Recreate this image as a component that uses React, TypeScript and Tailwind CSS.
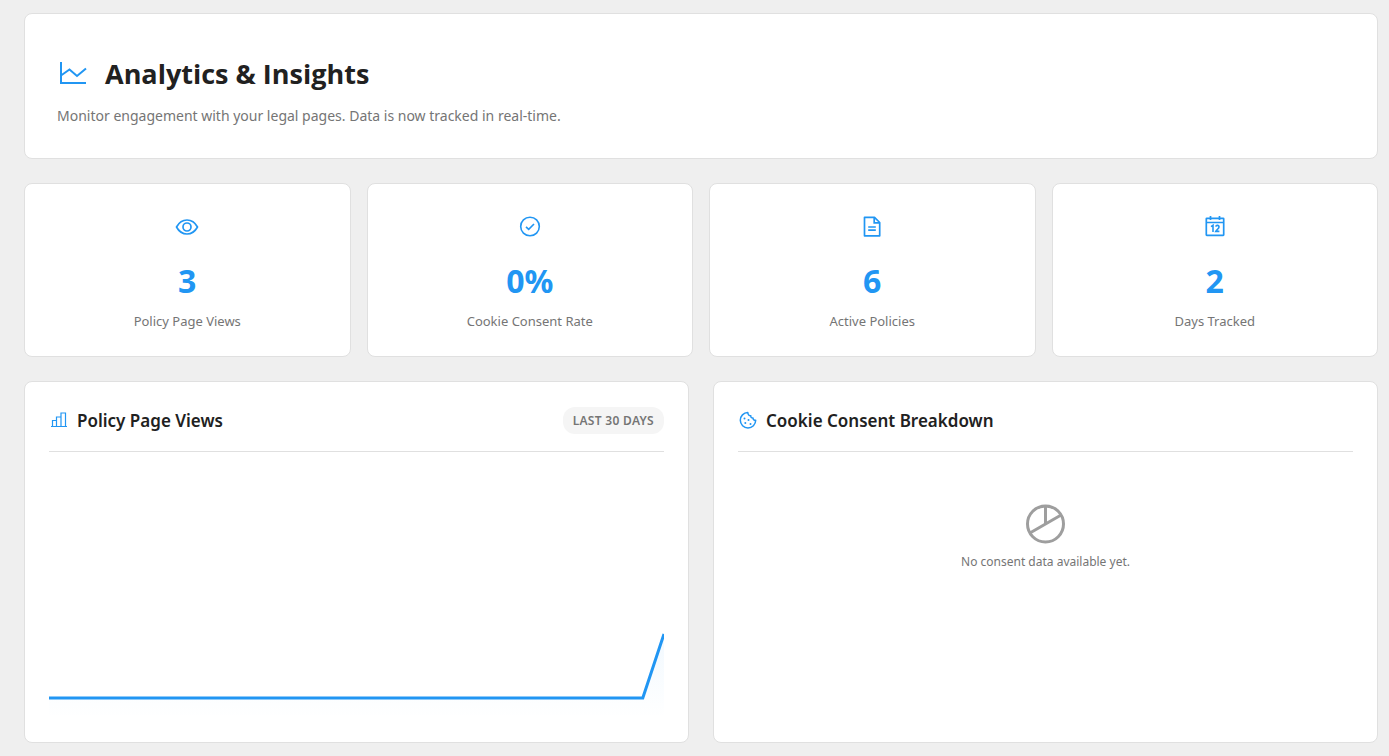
import type { ReactNode } from "react";

type IconProps = { className?: string };

function LineChartIcon({ className }: IconProps) {
  return (
    <svg viewBox="0 0 32 32" fill="none" stroke="currentColor" strokeWidth="2" className={className} aria-hidden="true">
      <path d="M4 4v21h25" />
      <path d="M4 17.500l8.500-6 7.500 6.500 9-7.500" />
    </svg>
  );
}

function EyeIcon({ className }: IconProps) {
  return (
    <svg viewBox="0 0 24 24" fill="none" stroke="currentColor" strokeWidth="1.700" className={className} aria-hidden="true">
      <path d="M1.500 12C4 7.400 7.600 5 12 5s8 2.400 10.500 7c-2.500 4.600-6.100 7-10.500 7S4 16.600 1.500 12z" strokeLinejoin="round" />
      <circle cx="12" cy="12" r="4" />
    </svg>
  );
}

function CheckIcon({ className }: IconProps) {
  return (
    <svg viewBox="0 0 24 24" fill="none" stroke="currentColor" strokeWidth="1.600" className={className} aria-hidden="true">
      <circle cx="12" cy="11.500" r="9.300" />
      <path d="M8 11.800l2.700 2.600 5.300-5.400" />
    </svg>
  );
}

function DocumentIcon({ className }: IconProps) {
  return (
    <svg viewBox="0 0 24 24" fill="none" stroke="currentColor" strokeWidth="1.700" className={className} aria-hidden="true">
      <path d="M4.500 2.300h10l5.200 5.200v13.300h-15.200z" strokeLinejoin="round" />
      <path d="M14.200 2.300v5.500h5.500" />
      <path d="M8.200 12h7.600M8.200 15.200h7.600" />
    </svg>
  );
}

function CalendarIcon({ className }: IconProps) {
  return (
    <svg viewBox="0 0 24 24" fill="none" stroke="currentColor" strokeWidth="1.700" className={className} aria-hidden="true">
      <rect x="3.300" y="3.300" width="17.400" height="17" rx="0.500" />
      <path d="M3.500 7.500h17M7.500 1v4M16.500 1v4" />
      <path d="M8 11.600l2-1.300V17M12.800 11.700c.3-2 3.400-1.700 3.200.3-.1 1.600-2.200 2.700-3.200 4.400h3.600" strokeWidth="1.600" />
    </svg>
  );
}

function BarsIcon({ className }: IconProps) {
  return (
    <svg viewBox="0 0 20 20" fill="none" stroke="currentColor" strokeWidth="1.200" className={className} aria-hidden="true">
      <path d="M2 15.500h16M3.500 15.500v-6h4v6M7.500 15.500v-9.500h4.500v9.500M12 15.500v-13.500h4.500v13.500" />
    </svg>
  );
}

function CookieIcon({ className }: IconProps) {
  return (
    <svg viewBox="0 0 20 20" fill="none" stroke="currentColor" strokeWidth="1.500" strokeLinejoin="round" className={className} aria-hidden="true">
      <path d="M9.800 1.500a7.700 7.700 0 1 0 7.900 7.800c-1.500.1-2.600-.7-2.700-2.200-1.400.1-2.400-.8-2.200-2.300-1.600.1-3-1.300-3-3.300z" />
      <g fill="currentColor" stroke="none">
        <circle cx="6.500" cy="7.500" r="1" />
        <circle cx="10.500" cy="9.100" r="1" />
        <circle cx="7.300" cy="12.100" r="1" />
        <circle cx="12.500" cy="12.900" r="1" />
      </g>
    </svg>
  );
}

function PieIcon({ className }: IconProps) {
  return (
    <svg viewBox="0 0 48 48" fill="none" stroke="currentColor" strokeWidth="3" className={className} aria-hidden="true">
      <circle cx="23.500" cy="24" r="18" />
      <path d="M23.500 6v18M7.900 33L39.100 15" />
    </svg>
  );
}

const stats: { icon: ReactNode; value: string; label: string }[] = [
  { icon: <EyeIcon className="size-6" />, value: "3", label: "Policy Page Views" },
  { icon: <CheckIcon className="size-6" />, value: "0%", label: "Cookie Consent Rate" },
  { icon: <DocumentIcon className="size-6" />, value: "6", label: "Active Policies" },
  { icon: <CalendarIcon className="size-6" />, value: "2", label: "Days Tracked" },
];

const card = "rounded-lg border border-[#e0e0e0] bg-white";

function PanelHeader({ icon, title, children }: { icon: ReactNode; title: string; children?: ReactNode }) {
  return (
    <div className="flex items-start justify-between border-b border-[#e0e0e0] pb-4">
      <h2 className="flex items-center gap-2 text-[17px] leading-7 font-semibold text-[#212121]">
        <span className="text-[#2196f3]">{icon}</span>
        {title}
      </h2>
      {children}
    </div>
  );
}

function ViewsChart() {
  const views = [...Array(29).fill(0), 1];
  const points = views.map((v, i) => `${((i * 615) / 29).toFixed(2)},${230 - v * 64}`).join(" ");
  return (
    <svg viewBox="0 0 615 250" preserveAspectRatio="none" className="mt-4 block h-[250px] w-full" role="img" aria-label="Policy page views over the last 30 days">
      <defs>
        <linearGradient id="area" gradientUnits="userSpaceOnUse" x1="0" y1="166" x2="0" y2="250">
          <stop offset="0" stopColor="#2196f3" stopOpacity="0.060" />
          <stop offset="1" stopColor="#2196f3" stopOpacity="0" />
        </linearGradient>
      </defs>
      <polygon points={`0,250 ${points} 615,250`} fill="url(#area)" />
      <polyline points={points} fill="none" stroke="#2196f3" strokeWidth="3" vectorEffect="non-scaling-stroke" />
    </svg>
  );
}

export default function App() {
  return (
    <main className="flex min-h-screen flex-col gap-6 bg-[#efefef] pt-[13px] pr-[11px] pb-[13px] pl-6 font-['Noto_Sans',sans-serif] text-[#757575]">
      <header className={`${card} px-8 pt-10 pb-[30px]`}>
        <h1 className="flex items-center gap-4 font-['Open_Sans','Noto_Sans',sans-serif] text-[27px] leading-10 font-bold text-[#212121]">
          <LineChartIcon className="size-8 text-[#2196f3]" />
          Analytics &amp; Insights
        </h1>
        <p className="mt-[10px] text-sm leading-6">
          Monitor engagement with your legal pages. Data is now tracked in real-time.
        </p>
      </header>

      <section className="grid grid-cols-4 gap-4">
        {stats.map((s) => (
          <div key={s.label} className={`${card} flex flex-col items-center px-6 pt-[31px] pb-[25px]`}>
            <span className="text-[#2196f3]">{s.icon}</span>
            <strong className="mt-[22px] text-[32px] leading-10 font-bold text-[#2196f3]">{s.value}</strong>
            <span className="mt-[10px] text-[13px] leading-5">{s.label}</span>
          </div>
        ))}
      </section>

      <section className="grid grid-cols-2 gap-6">
        <article className={`${card} px-6 pt-[25px] pb-6`}>
          <PanelHeader icon={<BarsIcon className="size-5" />} title="Policy Page Views">
            <span className="rounded-xl bg-[#f5f5f5] px-[10px] py-1 text-xs leading-[19px] font-semibold tracking-wide uppercase">
              Last 30 days
            </span>
          </PanelHeader>
          <ViewsChart />
        </article>
        <article className={`${card} px-6 pt-[25px] pb-6`}>
          <PanelHeader icon={<CookieIcon className="size-5" />} title="Cookie Consent Breakdown" />
          <div className="flex flex-col items-center pt-12">
            <PieIcon className="size-12 text-[#9e9e9e]" />
            <p className="mt-1 text-xs leading-5">No consent data available yet.</p>
          </div>
        </article>
      </section>
    </main>
  );
}
